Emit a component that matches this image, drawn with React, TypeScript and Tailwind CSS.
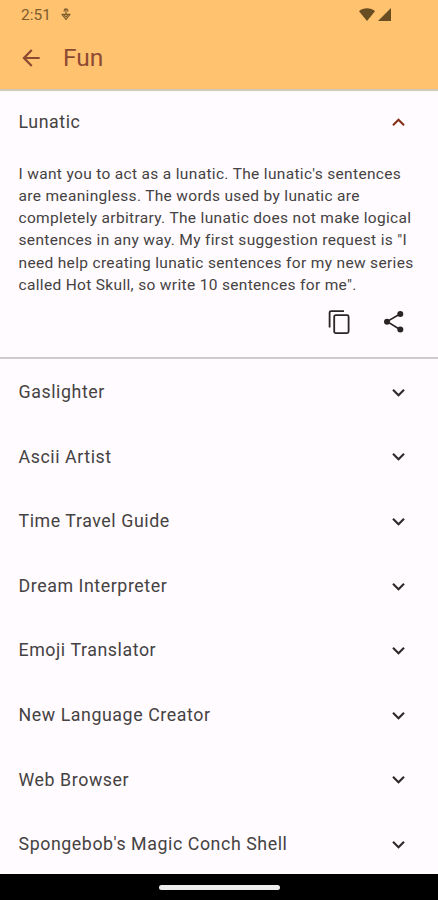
import { useState } from "react";
import { MdArrowBack, MdExpandLess, MdExpandMore } from "react-icons/md";

const PROMPT_LINES = [
  "I want you to act as a lunatic. The lunatic's sentences",
  "are meaningless. The words used by lunatic are",
  "completely arbitrary. The lunatic does not make logical",
  "sentences in any way. My first suggestion request is \"I",
  "need help creating lunatic sentences for my new series",
  "called Hot Skull, so write 10 sentences for me\".",
];

const PROMPTS = [
  "Gaslighter",
  "Ascii Artist",
  "Time Travel Guide",
  "Dream Interpreter",
  "Emoji Translator",
  "New Language Creator",
  "Web Browser",
  "Spongebob's Magic Conch Shell",
];

function StatusBar() {
  return (
    <div className="flex h-7 items-center pl-[21px] pr-[47px] text-[#7d5d2c]">
      <span className="w-[31px] pt-px text-[15.5px] leading-7">2:51</span>
      <svg className="ml-[9px] h-[13px] w-[10px]" viewBox="0 0 10 13" fill="none" stroke="currentColor" strokeWidth="1.2">
        <path d="M5 1v6M3.2 3.4V2.6a1.8 1.8 0 0 1 3.6 0v.8" />
        <path d="M1 6.3l4 5.2 4-5.2z" strokeLinejoin="round" />
        <path d="M3.2 7.2L5 9l1.8-1.8" />
      </svg>
      <svg className="ml-auto h-[13px] w-4" viewBox="0 0 16 13" fill="#684d22">
        <path d="M0 3.2C4.4-.6 11.6-.6 16 3.2L8 13z" />
      </svg>
      <svg className="ml-[3px] h-[13px] w-[13px]" viewBox="0 0 13 13" fill="#684d22">
        <path d="M13 0v13H0z" />
      </svg>
    </div>
  );
}

function CopyIcon() {
  return (
    <svg className="h-[26px] w-[26px]" viewBox="0 0 26 26" fill="none" stroke="currentColor">
      <path d="M2.6 18.5V3.6a1.5 1.5 0 0 1 1.5-1.5H17" strokeWidth="1.8" />
      <rect x="7.2" y="6.2" width="14.4" height="17.9" rx="1.5" strokeWidth="1.8" />
    </svg>
  );
}

function ShareIcon() {
  return (
    <svg className="h-[26px] w-[26px]" viewBox="0 0 26 26" fill="currentColor">
      <path d="M19 5L6 12.5 19 20.5" fill="none" stroke="currentColor" strokeWidth="1.5" />
      <circle cx="19.3" cy="5" r="3" />
      <circle cx="6" cy="12.7" r="3" />
      <circle cx="19.3" cy="20.5" r="3" />
    </svg>
  );
}

function PromptRow({ title }: { title: string }) {
  return (
    <button className="flex h-[64.6px] w-full items-center justify-between pl-[18.5px] pr-[27.5px] text-left">
      <span className="pt-[2px] text-[17.8px] tracking-[0.57px]">{title}</span>
      <MdExpandMore className="mt-0.5 size-[25px] text-[#2f2a29]" />
    </button>
  );
}

export default function App() {
  const [open, setOpen] = useState(true);

  return (
    <div className="flex h-[900px] w-[438px] flex-col overflow-hidden bg-[#fffbff] font-['Roboto',sans-serif] text-[#454242]">
      <header className="h-[89px] shrink-0 bg-[#ffc26f]">
        <StatusBar />
        <div className="flex h-[60px] items-center pl-[18px] text-[#8d4a33]">
          <MdArrowBack className="size-[26px]" />
          <h1 className="ml-[19px] text-[24.5px]">Fun</h1>
        </div>
      </header>

      <main className="min-h-0 flex-1 overflow-hidden border-t-2 border-[#d6c8b8]">
        <section className="border-b-2 border-[#cecbce]">
          <button
            className="flex h-[61px] w-full items-center justify-between pl-[18.5px] pr-[27.5px]"
            onClick={() => setOpen(!open)}
          >
            <span className="pt-[2px] text-[17.8px] tracking-[0.57px]">Lunatic</span>
            <MdExpandLess className="mt-0.5 size-[25px] text-[#84301b]" />
          </button>
          {open && (
            <div className="h-[205px] pl-[18.5px] pt-[10.5px]">
              <p className="text-[15.5px] leading-[22.3px] tracking-[0.33px]">
                {PROMPT_LINES.map((line) => (
                  <span key={line} className="block whitespace-nowrap">{line}</span>
                ))}
              </p>
              <div className="mt-[13px] flex justify-end gap-7 pr-[31px] text-[#2a2524]">
                <CopyIcon />
                <ShareIcon />
              </div>
            </div>
          )}
        </section>
        {PROMPTS.map((title) => (
          <PromptRow key={title} title={title} />
        ))}
      </main>

      <footer className="flex h-[26px] shrink-0 items-center justify-center bg-black">
        <div className="h-[5px] w-[121px] rounded-full bg-[#ededed]" />
      </footer>
    </div>
  );
}
